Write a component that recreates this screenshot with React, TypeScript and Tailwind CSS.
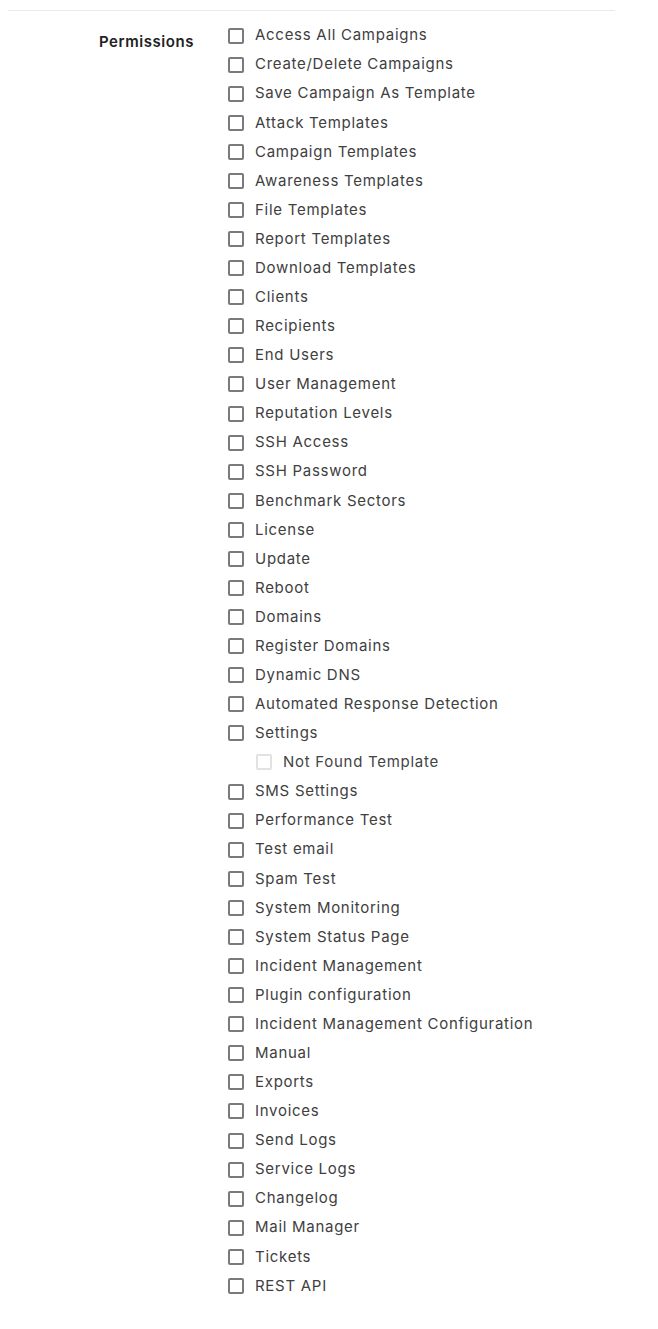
import React from 'react';

interface Permission {
  label: string;
  child?: boolean;
}

const permissions: Permission[] = [
  { label: 'Access All Campaigns' },
  { label: 'Create/Delete Campaigns' },
  { label: 'Save Campaign As Template' },
  { label: 'Attack Templates' },
  { label: 'Campaign Templates' },
  { label: 'Awareness Templates' },
  { label: 'File Templates' },
  { label: 'Report Templates' },
  { label: 'Download Templates' },
  { label: 'Clients' },
  { label: 'Recipients' },
  { label: 'End Users' },
  { label: 'User Management' },
  { label: 'Reputation Levels' },
  { label: 'SSH Access' },
  { label: 'SSH Password' },
  { label: 'Benchmark Sectors' },
  { label: 'License' },
  { label: 'Update' },
  { label: 'Reboot' },
  { label: 'Domains' },
  { label: 'Register Domains' },
  { label: 'Dynamic DNS' },
  { label: 'Automated Response Detection' },
  { label: 'Settings' },
  { label: 'Not Found Template', child: true },
  { label: 'SMS Settings' },
  { label: 'Performance Test' },
  { label: 'Test email' },
  { label: 'Spam Test' },
  { label: 'System Monitoring' },
  { label: 'System Status Page' },
  { label: 'Incident Management' },
  { label: 'Plugin configuration' },
  { label: 'Incident Management Configuration' },
  { label: 'Manual' },
  { label: 'Exports' },
  { label: 'Invoices' },
  { label: 'Send Logs' },
  { label: 'Service Logs' },
  { label: 'Changelog' },
  { label: 'Mail Manager' },
  { label: 'Tickets' },
  { label: 'REST API' },
];

function PermissionRow({ label, child }: Permission) {
  return (
    <label
      className={`flex items-center h-[29.09px] gap-[11px] ${child ? 'pl-[28px] text-[#444]' : ''}`}
    >
      <span
        className={`block w-[16px] h-[16px] rounded-[2px] border-2 bg-white ${
          child ? 'border-[#e2e2e2]' : 'border-[#7a7a7a]'
        }`}
      />
      <span>{label}</span>
    </label>
  );
}

export default function App() {
  return (
    <div className="bg-white w-[658px] h-[1329px] font-['Inter',sans-serif] text-[#404040]">
      <div className="pt-[10px] pl-[8px] pr-[43px]">
        <div className="h-px bg-[#ebebeb]" />
      </div>
      <div className="flex pt-[10px]">
        <div className="w-[194px] shrink-0 pt-[13px] pl-[99px]">
          <span className="text-[15px] font-semibold text-[#222] leading-none block tracking-[0.55px]">
            Permissions
          </span>
        </div>
        <div className="pl-[34px] text-[15px] tracking-[0.72px]">
          {permissions.map((p) => (
            <PermissionRow key={p.label} {...p} />
          ))}
        </div>
      </div>
    </div>
  );
}
